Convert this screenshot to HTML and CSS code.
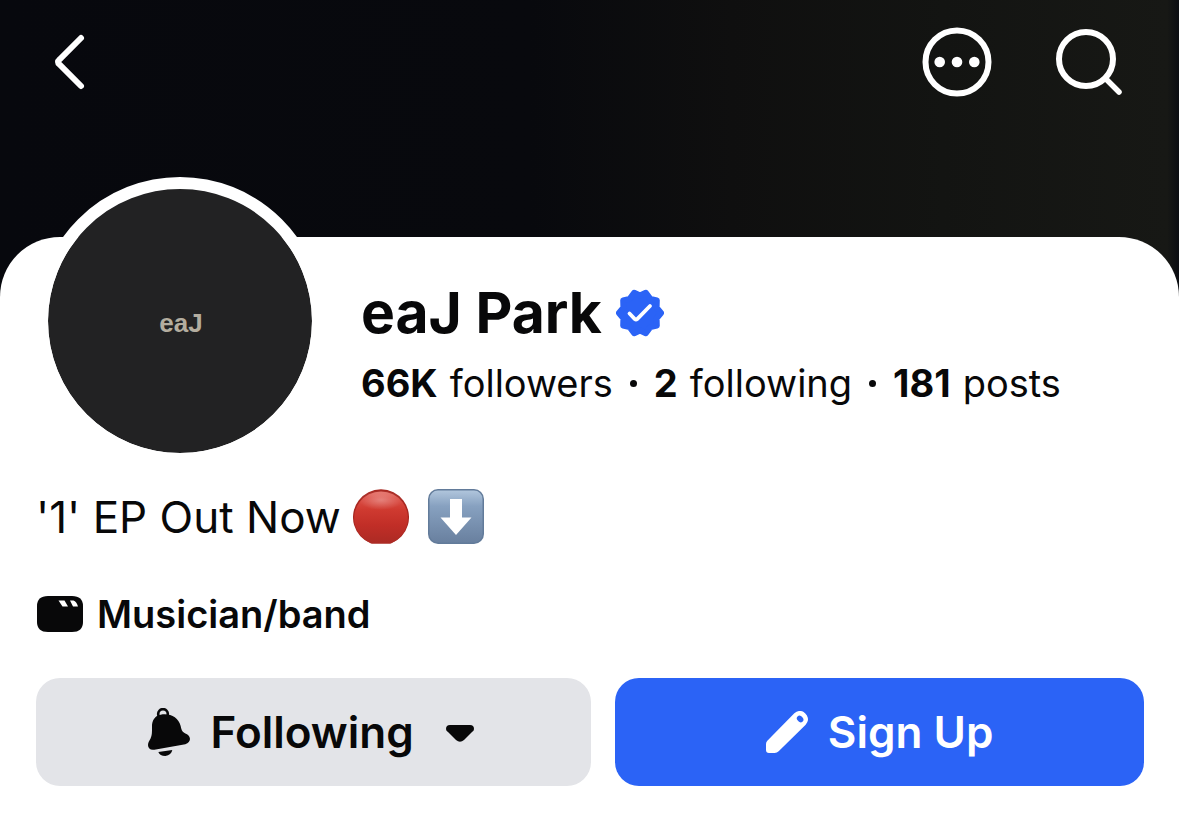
FILE: index.html
```html
<!DOCTYPE html>
<html lang="en">
<head>
<meta charset="utf-8">
<meta name="viewport" content="width=device-width, initial-scale=1">
<title>eaJ Park</title>
<link rel="stylesheet" href="styles.css">
</head>
<body>
<header class="cover">
  <nav class="toolbar" aria-label="Page">
    <button class="icon-button" type="button" aria-label="Back">
      <svg width="72" height="72" viewBox="0 0 72 72" fill="none" stroke="#fff" stroke-width="6" stroke-linecap="round"><path d="M47 12 25.500 33.500q-3 2.500 0 5L47 60"/></svg>
    </button>
    <div class="toolbar-end">
      <button class="icon-button" type="button" aria-label="More options">
        <svg width="72" height="72" viewBox="0 0 72 72"><circle cx="36" cy="36" r="31.500" fill="none" stroke="#fff" stroke-width="6"/><g fill="#fff"><circle cx="18.700" cy="36" r="5.300"/><circle cx="36" cy="36" r="5.300"/><circle cx="53.300" cy="36" r="5.300"/></g></svg>
      </button>
      <button class="icon-button" type="button" aria-label="Search">
        <svg width="72" height="72" viewBox="0 0 72 72" fill="none" stroke="#fff" stroke-width="6"><circle cx="33" cy="33" r="27"/><path d="m53 53 13 13" stroke-linecap="round" stroke-width="5.500"/></svg>
      </button>
    </div>
  </nav>
</header>

<main class="sheet">
  <section class="identity">
    <div class="avatar"><span class="avatar-text">eaJ</span></div>
    <div class="summary">
      <h1 class="name">eaJ Park
        <svg class="badge" role="img" aria-label="Verified" width="48" height="48" viewBox="0 0 48 48"><path fill="#2b63f6" stroke="#2b63f6" stroke-width="6" stroke-linejoin="round" d="M45 24 40.600 29.400 40.800 36.600 34.300 38.200 29.800 44.200 24 41.500 18.200 44.200 13.700 38.200 7.200 36.600 7.400 29.400 3 24 7.400 18.600 7.200 11.400 13.700 9.800 18.200 3.800 24 6.500 29.800 3.800 34.300 9.800 40.800 11.400 40.600 18.600Z"/><path d="m13.500 24.500 5.300 5.500q1.200 1 2.400 0L34 17" fill="none" stroke="#fff" stroke-width="3.800" stroke-linecap="round"/></svg>
      </h1>
      <div class="stats">
        <a href="#followers"><b>66K</b><span>followers</span></a>
        <i class="dot"></i>
        <a href="#following"><b>2</b><span>following</span></a>
        <i class="dot"></i>
        <a href="#posts"><b>181</b><span>posts</span></a>
      </div>
    </div>
  </section>

  <p class="bio">
    <span>'1' EP Out Now</span>
    <span class="emojis">
      <svg role="img" aria-label="Red circle" width="56" height="56" viewBox="0 0 56 56">
        <defs>
          <linearGradient id="red" x1="0" y1="0" x2="0" y2="1"><stop offset="0" stop-color="#e4726a"/><stop offset=".12" stop-color="#dc5047"/><stop offset=".35" stop-color="#cf3a30"/><stop offset=".65" stop-color="#c12e27"/><stop offset="1" stop-color="#ab2a24"/></linearGradient>
          <radialGradient id="shine"><stop offset="0" stop-color="#fff" stop-opacity=".3"/><stop offset="1" stop-color="#fff" stop-opacity="0"/></radialGradient>
        </defs>
        <path d="M18 54.500A28 28 0 1 1 38 54.500Z" fill="#a82720"/><path d="M19 54.500A26.800 26.800 0 1 1 37 54.500Z" fill="url(#red)"/><ellipse cx="28" cy="11" rx="22" ry="10" fill="url(#shine)"/>
      </svg>
      <svg role="img" aria-label="Down arrow" width="56" height="56" viewBox="0 0 56 56">
        <defs><linearGradient id="slate" x1="0" y1="0" x2="0" y2="1"><stop offset="0" stop-color="#b0c5dc"/><stop offset=".3" stop-color="#87a1c0"/><stop offset="1" stop-color="#69809f"/></linearGradient></defs>
        <rect width="56" height="55" rx="10" fill="#627b9a"/><rect x="1.500" y="1.500" width="53" height="52" rx="8.500" fill="url(#slate)"/><path d="M22 10h12v18.500h9.500L28 46 12.500 28.500H22Z" fill="#fff"/>
      </svg>
    </span>
  </p>

  <p class="category">
    <svg width="46" height="36" viewBox="0 0 46 36" aria-hidden="true"><path fill="#080809" d="M11 0h24q11 0 11 10v16q0 10-11 10H11Q0 36 0 26V10Q0 0 11 0Z"/><path fill="#fff" d="M21.500 4.500h6l3.500 6h-5.500ZM33 4.500h3.500q3 1 4.500 6h-5Z"/></svg>
    <span>Musician/band</span>
  </p>

  <div class="actions">
    <button class="action action-following" type="button">
      <svg width="42" height="48" viewBox="57 54 126 144" aria-hidden="true"><circle cx="102" cy="72" r="14.500" fill="none" stroke="#080809" stroke-width="8"/><path fill="#080809" d="M95 74C124 69 148 82 155 108C158 123 160 126 174 133C187 141 186 158 169 163L76 179C61 182 53 170 59 156C69 140 69 134 69 112C68 92 77 77 95 74ZM88 186 130 180C128 190 121 196 109 198C98 198 91 194 88 186Z"/></svg>
      <span>Following</span>
      <svg class="caret" width="28" height="20" viewBox="0 0 28 20" aria-hidden="true"><path fill="#080809" d="M4 3h20q4 0 4 4 0 2-2 3l-8 8q-4 3.500-8 0L2 10Q0 9 0 7 0 3 4 3Z"/></svg>
    </button>
    <button class="action action-signup" type="button">
      <svg width="42" height="42" viewBox="75 63 126 126" aria-hidden="true"><path fill="#fff" fill-rule="evenodd" d="M75 162Q75 156 79 152L160 70Q173 58 188 66Q201 75 201 90Q200 97 194 104L113 184Q108 189 101 189H84Q75 189 75 180ZM171 78Q163 85 171 92L174 95Q181 100 186 94Q190 88 184 82L180 78Q175 75 171 78Z"/></svg>
      <span>Sign Up</span>
    </button>
  </div>
</main>
</body>
</html>
```
FILE: styles.css
```css
* { box-sizing: border-box; }

body {
  margin: 0;
  background: #fff;
  color: #080809;
  font-family: Inter, "Liberation Sans", sans-serif;
}

h1, p { margin: 0; }
svg { display: block; flex: none; }
a { color: inherit; text-decoration: none; }

button {
  border: 0;
  padding: 0;
  font: inherit;
  color: inherit;
  background: none;
  cursor: pointer;
}

.cover {
  height: 301px;
  padding: 26px 54px 0 34px;
  background: linear-gradient(90deg, #07080d 0%, #08090d 45%, #0f0f0f 62%, #131412 80%, #171815 99%, #0b0d12 100%);
}

.toolbar,
.toolbar-end { display: flex; justify-content: space-between; }
.toolbar-end { gap: 60px; }

.sheet {
  margin-top: -64px;
  padding: 0 35px 46px 36px;
  border-radius: 60px 60px 0 0;
  background: #fff;
}

.identity { display: flex; gap: 37px; }

.avatar {
  display: grid;
  place-items: center;
  flex: none;
  width: 288px;
  height: 288px;
  margin-top: -60px;
  border: 12px solid #fff;
  border-radius: 50%;
  background: #222223;
  background-clip: padding-box;
}

.avatar-text {
  padding: 4px 0 0 2px;
  color: #b3ad9f;
  font: bold 26px/32px "Liberation Sans", Arial, sans-serif;
}

.summary { padding-top: 41px; }

.name {
  display: flex;
  align-items: center;
  gap: 14px;
  font-size: 57px;
  line-height: 70px;
  font-weight: 700;
}

.stats {
  display: flex;
  align-items: center;
  gap: 17px;
  margin-top: 11px;
  font-size: 38px;
  line-height: 48px;
  white-space: nowrap;
}

.stats a { display: flex; gap: 12px; }
.stats b { font-weight: 700; }

.dot {
  width: 7px;
  height: 7px;
  border-radius: 50%;
  background: #080809;
}

.bio {
  display: flex;
  align-items: center;
  gap: 12px;
  margin-top: 24px;
  font-size: 44px;
  line-height: 56px;
}

.emojis { display: flex; gap: 19px; }

.category {
  display: flex;
  align-items: center;
  gap: 14px;
  margin-top: 45px;
  padding-left: 1px;
  font-size: 38px;
  line-height: 48px;
  font-weight: 600;
}

.actions {
  display: grid;
  grid-template-columns: 21fr 20fr;
  gap: 24px;
  margin-top: 40px;
}

.action {
  display: flex;
  align-items: center;
  justify-content: center;
  gap: 20px;
  height: 108px;
  border-radius: 24px;
  font-size: 44px;
  line-height: 56px;
  font-weight: 600;
}

.action-following { padding-right: 5px; background: #e3e4e8; }
.action-signup { background: #2b63f6; color: #fff; }
.caret { margin-left: 12px; }
```
